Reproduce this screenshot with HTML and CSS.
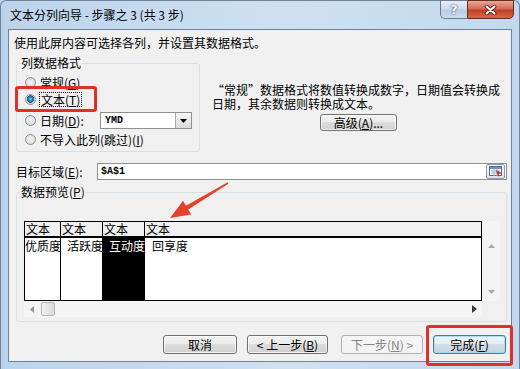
FILE: index.html
```html
<!DOCTYPE html>
<html lang="zh-CN">
<head>
  <meta charset="UTF-8" />
  <title>文本分列向导 - 步骤之 3 (共 3 步)</title>
  <link rel="stylesheet" href="styles.css">
</head>
<body>

  <div class="window">
    <div class="titlebar">
      <span class="title">文本分列向导 - 步骤之 3 (共 3 步)</span>
      <span class="cap-help">?</span>
      <span class="cap-close">
        <svg width="13" height="10" viewBox="0 0 13 10">
          <path d="M2.5 1.5 L10.5 8.5 M10.5 1.5 L2.5 8.5" stroke="#5b2216" stroke-width="3.8" stroke-linecap="round"/>
          <path d="M2.5 1.5 L10.5 8.5 M10.5 1.5 L2.5 8.5" stroke="#fff" stroke-width="2" stroke-linecap="round"/>
        </svg>
      </span>
    </div>

    <div class="client">
      <p class="intro">使用此屏内容可选择各列，并设置其数据格式。</p>

      <div class="top-row">
        <fieldset class="group format">
          <legend>列数据格式</legend>
          <div class="radio-row"><span class="radio"></span>常规(<u>G</u>)</div>
          <div class="radio-row"><span class="radio checked"></span><span class="focus">文本(<u>T</u>)</span></div>
          <div class="radio-row date">
            <span class="radio"></span>日期(<u>D</u>):
            <span class="select">YMD
              <span class="select-btn">
                <svg width="7" height="4" viewBox="0 0 7 4"><path d="M0 0 H7 L3.5 4 Z" fill="#000"/></svg>
              </span>
            </span>
          </div>
          <div class="radio-row"><span class="radio"></span>不导入此列(跳过)(<u>I</u>)</div>
        </fieldset>

        <div class="desc">
          <p>“常规”数据格式将数值转换成数字，日期值会转换成</p>
          <p>日期，其余数据则转换成文本。</p>
          <button class="btn advanced">高级(<u>A</u>)...</button>
        </div>
      </div>

      <div class="target-row">
        <span class="target-label">目标区域(<u>E</u>):</span>
        <div class="input">
          $A$1
          <span class="ref-btn">
            <svg width="14" height="11" viewBox="0 0 14 11">
              <rect x="0.5" y="0.5" width="12" height="9" fill="#fff" stroke="#4d6c92"/>
              <rect x="1" y="1" width="11" height="2" fill="#6f94c4"/>
              <path d="M2 5 H11 M2 7 H11 M5 3 V10 M8 3 V10" stroke="#9fb2c8" stroke-width="1"/>
              <path d="M7 4 L13 7 L10 8 L9 11 Z" fill="#d0312a"/>
            </svg>
          </span>
        </div>
      </div>

      <fieldset class="group preview">
        <legend>数据预览(<u>P</u>)</legend>
        <div class="preview-body">
          <div class="grid-wrap">
            <div class="table">
              <div class="cell head">文本</div>
              <div class="cell head">文本</div>
              <div class="cell head">文本</div>
              <div class="cell head last">文本</div>
              <div class="cell">优质度</div>
              <div class="cell pad">活跃度</div>
              <div class="cell pad selected">互动度</div>
              <div class="cell pad last">回享度</div>
            </div>
            <div class="vscroll">
              <svg width="7" height="4" viewBox="0 0 7 4"><path d="M0 4 H7 L3.5 0 Z" fill="#a4a9ae"/></svg>
              <svg width="7" height="4" viewBox="0 0 7 4"><path d="M0 0 H7 L3.5 4 Z" fill="#a4a9ae"/></svg>
            </div>
          </div>
          <div class="hscroll">
            <svg width="4" height="7" viewBox="0 0 4 7"><path d="M4 0 V7 L0 3.5 Z" fill="#8d9196"/></svg>
            <span class="thumb"></span>
            <svg class="right-arrow" width="5" height="8" viewBox="0 0 5 8"><path d="M0 0 V8 L5 4 Z" fill="#3a3a3a"/></svg>
          </div>
        </div>
      </fieldset>

      <div class="buttons">
        <button class="btn cancel">取消</button>
        <button class="btn back">&lt; 上一步(<u>B</u>)</button>
        <button class="btn next" disabled>下一步(<u>N</u>) &gt;</button>
        <button class="btn finish">完成(<u>F</u>)</button>
      </div>
    </div>
  </div>

  <!-- annotations drawn over the dialog -->
  <div class="mark mark-text"></div>
  <div class="mark mark-finish"></div>
  <svg class="arrow" width="70" height="45" viewBox="0 0 70 45">
    <polygon points="63.4,5.7 23.2,31.6 26.2,36.6 5,40 18,22.8 21,27.8 62.6,4.3" fill="#e5412d"/>
  </svg>

</body>
</html>
```

FILE: styles.css
```css
* {
  box-sizing: border-box;
}

body {
  margin: 0;
  width: 520px;
  height: 369px;
  overflow: hidden;
  position: relative;
  font: 12px/14px "Noto Sans CJK SC", "Liberation Sans", sans-serif;
  color: #000;
  background: #c2d7ed;
}

u {
  text-decoration: underline;
}

.window {
  height: 369px;
  display: flex;
  flex-direction: column;
  padding: 0 7px 7px;
  border: 1px solid #71849a;
  border-bottom: none;
  border-radius: 6px 6px 0 0;
  background: linear-gradient(to right, #bcd3ec 0%, #cfe0f2 55%, #c3d8ee 100%);
}

/* title bar */
.titlebar {
  height: 28px;
  display: flex;
  align-items: flex-start;
}

.title {
  flex: 1;
  padding: 7px 0 0 2px;
}

.cap-help,
.cap-close {
  height: 19px;
  margin-top: -1px;
  display: flex;
  align-items: center;
  justify-content: center;
  border: 1px solid #6a7b8f;
}

.cap-help {
  width: 27px;
  border-right: none;
  border-radius: 0 0 0 5px;
  background: linear-gradient(#e6eef8, #cddcee 45%, #b8cde6 55%, #cadcf0);
  color: #f6f9fc;
  font: bold 13px/1 "DejaVu Sans", sans-serif;
  text-shadow: 0 0 2px #4a5a6c, 0 0 1px #4a5a6c;
}

.cap-close {
  width: 47px;
  margin-right: -2px;
  border-color: #6b2a1e;
  border-radius: 0 0 5px 0;
  background: linear-gradient(#e9a898, #d66a52 45%, #c43d22 55%, #d56b4c);
}

/* client area */
.client {
  flex: 1;
  display: flex;
  flex-direction: column;
  background: #f0f0f0;
  border: 1px solid #6d8197;
}

.intro {
  margin: 6px 0 0 5px;
}

.group {
  margin: 0;
  padding: 0;
  border: 1px solid #d5dfe5;
  border-radius: 3px;
  min-width: 0;
}

.group legend {
  margin-left: 3px;
  padding: 0 1px;
  line-height: 14px;
}

.top-row {
  display: flex;
  align-items: flex-start;
  margin-top: 6px;
}

.format {
  width: 184px;
  margin-left: 7px;
  padding: 4px 0 3px;
}

.radio-row {
  display: flex;
  align-items: center;
  height: 17px;
  padding-left: 8px;
  white-space: nowrap;
}

.radio-row.date {
  height: 21px;
  margin-top: 2px;
}

.radio {
  width: 11px;
  height: 11px;
  margin-right: 4px;
  border-radius: 50%;
  border: 1px solid #8e8f8f;
  background: radial-gradient(circle at 50% 45%, #f4f4f4 0, #dcdcdc 70%, #cfcfcf 100%);
}

.radio.checked {
  background:
    radial-gradient(circle at 50% 45%, #8fdcf5 0, #2f9ad0 1.5px, #12527c 3.5px, transparent 4px),
    radial-gradient(circle at 50% 45%, #f4f4f4 0, #dcdcdc 70%, #cfcfcf 100%);
}

.focus {
  outline: 1px dotted #000;
  line-height: 13px;
  padding: 0 1px;
}

.select {
  margin-left: auto;
  margin-right: 7px;
  width: 92px;
  height: 17px;
  display: flex;
  align-items: center;
  padding-left: 4px;
  background: #fff;
  border: 1px solid #8e8f8f;
  font: bold 10px/1 "Liberation Mono", monospace;
}

.select-btn {
  margin-left: auto;
  width: 16px;
  height: 15px;
  display: flex;
  align-items: center;
  justify-content: center;
  border-left: 1px solid #a9a9a9;
  background: linear-gradient(#f6f6f6, #dadada);
}

.desc {
  width: 293px;
  margin: 27px 0 0 12px;
  display: flex;
  flex-direction: column;
  align-items: center;
}

.desc p {
  width: 100%;
  margin: 0;
  line-height: 14px;
  white-space: nowrap;
}

/* buttons */
.btn {
  height: 19px;
  padding: 0;
  font: 12px/1 "Noto Sans CJK SC", "Liberation Sans", sans-serif;
  color: #000;
  border: 1px solid #707070;
  border-radius: 3px;
  background: linear-gradient(#f2f2f2 0%, #ebebeb 50%, #dddddd 50%, #cfcfcf 100%);
  box-shadow: inset 0 0 0 1px rgba(255, 255, 255, 0.7);
}

.advanced {
  width: 77px;
  height: 17px;
  margin-top: 3px;
}

/* target row */
.target-row {
  display: flex;
  align-items: center;
  height: 17px;
  margin: 11px 0 0 7px;
}

.target-label {
  width: 81px;
  white-space: nowrap;
}

.input {
  width: 410px;
  height: 17px;
  display: flex;
  align-items: center;
  padding-left: 3px;
  background: #fff;
  border: 1px solid #8e8f8f;
  font: bold 10px/1 "Liberation Mono", monospace;
}

.ref-btn {
  margin: 0 1px 0 auto;
  width: 19px;
  height: 15px;
  display: flex;
  align-items: center;
  justify-content: center;
  border: 1px solid #8a9bb0;
  border-radius: 2px;
  background: linear-gradient(#fbfbfb, #dfe3e8);
}

/* data preview */
.preview {
  width: 491px;
  margin: 5px 0 0 7px;
}

.preview-body {
  padding: 22px 6px 4px 7px;
}

.grid-wrap {
  display: flex;
}

.table {
  width: 458px;
  height: 80px;
  display: grid;
  grid-template-columns: 36px 42px 42px 1fr;
  grid-template-rows: 16px 62px;
  border: 1px solid #000;
  background: #fff;
}

.cell {
  border-right: 1px solid #000;
  line-height: 16px;
  white-space: nowrap;
}

.cell.head {
  line-height: 14px;
  background: #f0f0f0;
  border-bottom: 2px solid #000;
  padding-left: 1px;
}

.cell.pad {
  padding-left: 6px;
}

.cell.last {
  border-right: none;
}

.cell.last.pad {
  padding-left: 7px;
}

.cell.selected {
  background: #000;
  color: #fff;
}

.vscroll {
  width: 18px;
  height: 80px;
  display: flex;
  flex-direction: column;
  align-items: center;
  justify-content: space-between;
  padding: 23px 0 7px;
  background: #f4f4f4;
}

.hscroll {
  width: 458px;
  height: 16px;
  display: flex;
  align-items: center;
  padding: 0 5px 0 6px;
  background: #f4f4f4;
}

.thumb {
  width: 14px;
  height: 14px;
  margin-left: 7px;
  border: 1px solid #b5b5b5;
  border-radius: 2px;
  background: linear-gradient(to right, #f0f0f0, #d9d9d9);
}

.right-arrow {
  margin-left: auto;
}

/* bottom buttons */
.buttons {
  display: flex;
  justify-content: flex-end;
  margin-top: 13px;
  padding-right: 5px;
}

.cancel {
  width: 74px;
}

.back {
  width: 81px;
  margin-left: 10px;
}

.next {
  width: 82px;
  margin-left: 13px;
  color: #838383;
  border-color: #adb2b5;
  background: #f4f4f4;
  box-shadow: none;
}

.finish {
  width: 73px;
  margin-left: 10px;
  border-color: #3c7fb1;
  background: linear-gradient(#eef4f8 0%, #e3ecf2 50%, #d3dfe8 50%, #c4d3de 100%);
  box-shadow: inset 0 0 0 1px #a9dbf6;
}

/* red annotations */
.mark {
  position: absolute;
  border: 3px solid #e0302a;
  border-radius: 3px;
}

.mark-text {
  left: 15px;
  top: 86px;
  width: 82px;
  height: 26px;
}

.mark-finish {
  left: 426px;
  top: 325px;
  width: 87px;
  height: 41px;
}

.arrow {
  position: absolute;
  left: 165px;
  top: 178px;
}
```
